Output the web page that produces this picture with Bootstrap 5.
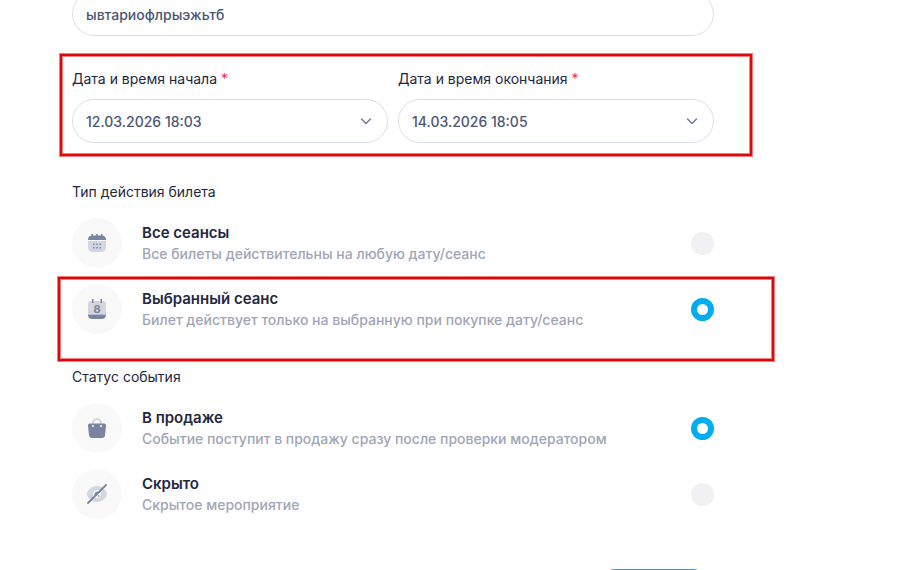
<!DOCTYPE html>
<html lang="ru">
<head>
<meta charset="utf-8">
<meta name="viewport" content="width=device-width, initial-scale=1">
<title>Событие</title>
<link href="https://cdn.jsdelivr.net/npm/bootstrap@5.3.0/dist/css/bootstrap.min.css" rel="stylesheet">
<style>
body { font-family: Inter, "Liberation Sans", sans-serif; font-size: 14px; line-height: 20px; color: #1f2742; height: 100vh; overflow: hidden; }
/* the form is scrolled: its first field starts above the window */
.event-form { margin: -8px 184px 0 72px; }
.pill { height: 44px; border: 1px solid #dbdfe9; border-radius: 22px; padding: 0 13px; font-size: 14px; font-weight: 500; color: #4b5675; }
select.pill { background-size: 16px 16px; background-position: right 13px center;
  background-image: url("data:image/svg+xml,%3Csvg xmlns='http://www.w3.org/2000/svg' viewBox='0 0 16 16'%3E%3Cpath d='M3.5 6 8 10.5 12.5 6' fill='none' stroke='%2378829d' stroke-width='1.6' stroke-linecap='round' stroke-linejoin='round'/%3E%3C/svg%3E"); }
.caption { font-size: 14px; font-weight: 400; line-height: 20px; margin: 0; float: none; }
.dates { margin-top: 33px; column-gap: 10px; }
.dates .caption { margin-bottom: 10px; }
.req { color: #f8285a; }
.group-type { margin-top: 39px; }
.group-status { margin-top: 33px; }
.option { margin-top: 16px; }
.symbol { width: 50px; height: 50px; background: #f9f9f9; margin-right: 20px; color: #7a839f; }
.symbol text { font-size: 11px; font-weight: 700; }
.option-title { font-size: 15px; font-weight: 600; line-height: 20px; padding-top: 2px; }
.option-note { font-size: 14px; font-weight: 500; line-height: 22px; color: #a1a5b7; }
.option .form-check-input { width: 23px; height: 23px; margin: 0; border: 0; background-color: #f1f1f4; }
.option .form-check-input:checked { background: #fff; border: 6px solid #00aeef; }
.btn-save { margin-top: 50px; width: 120px; height: 44px; border-radius: 22px; background: #00aeef; color: #fff; font-size: 14px; font-weight: 500; }
.frame { border: 2px solid #da0a0a; box-shadow: 0 0 0 1px #f08080, inset 0 0 0 1px #f08080; pointer-events: none; }
.frame-dates { inset: -15px -38px -13px -12px; }
.frame-option { inset: -7px -60px -27px -14px; }
</style>
<script src="https://cdn.jsdelivr.net/npm/bootstrap@5.3.0/dist/js/bootstrap.bundle.min.js"></script>
</head>
<body class="bg-white">
<form class="event-form">
  <input type="text" class="form-control pill" aria-label="Название" value="ывтариофлрыэжьтб">

  <div class="dates d-flex position-relative">
    <div class="col">
      <label class="caption d-block" for="start">Дата и время начала <span class="req">*</span></label>
      <select class="form-select pill" id="start"><option>12.03.2026 18:03</option></select>
    </div>
    <div class="col">
      <label class="caption d-block" for="end">Дата и время окончания <span class="req">*</span></label>
      <select class="form-select pill" id="end"><option>14.03.2026 18:05</option></select>
    </div>
    <div class="frame frame-dates position-absolute"></div>
  </div>

  <fieldset class="group-type">
    <legend class="caption">Тип действия билета</legend>
    <label class="option d-flex align-items-center">
      <span class="symbol rounded-circle d-flex align-items-center justify-content-center">
        <svg width="24" height="24" viewBox="0 0 24 24" fill="currentColor">
          <path opacity=".3" d="M3 10h18v6q0 5-5 5H8q-5 0-5-5z"/>
          <path d="M3 9q0-4 3.5-4.500V3h1.500v1.500h3.200V3h1.500v1.500H16V3h1.500v1.500Q21 5 21 9z"/>
          <path d="M8 12.500h1.500V14H8zm3.200 0h1.500V14h-1.500zm3.300 0H16V14h-1.500zM8 16h1.500v1.500H8zm3.200 0h1.500v1.500h-1.500zm3.300 0H16v1.500h-1.500z"/>
        </svg>
      </span>
      <span class="flex-grow-1"><span class="option-title d-block">Все сеансы</span><span class="option-note d-block">Все билеты действительны на любую дату/сеанс</span></span>
      <input class="form-check-input" type="radio" name="type">
    </label>
    <label class="option d-flex align-items-center position-relative">
      <span class="symbol rounded-circle d-flex align-items-center justify-content-center">
        <svg width="24" height="24" viewBox="0 0 24 24" fill="currentColor">
          <path opacity=".3" d="M6 4h12q3 0 3 3v10H3V7q0-3 3-3z"/>
          <path d="M3 17.500h18Q21 22 16.500 22h-9Q3 22 3 17.500zM7 2h1.500v4H7zm8.500 0H17v4h-1.500z"/>
          <text x="12" y="16" text-anchor="middle">8</text>
        </svg>
      </span>
      <span class="flex-grow-1"><span class="option-title d-block">Выбранный сеанс</span><span class="option-note d-block">Билет действует только на выбранную при покупке дату/сеанс</span></span>
      <input class="form-check-input" type="radio" name="type" checked>
      <span class="frame frame-option position-absolute"></span>
    </label>
  </fieldset>

  <fieldset class="group-status">
    <legend class="caption">Статус события</legend>
    <label class="option d-flex align-items-center">
      <span class="symbol rounded-circle d-flex align-items-center justify-content-center">
        <svg width="24" height="24" viewBox="0 0 24 24" fill="currentColor">
          <path opacity=".3" d="M7 9V7a5 5 0 0 1 10 0v2h-2V7a3 3 0 0 0-6 0v2z"/>
          <path fill-rule="evenodd" d="M5 7.500h14q2.300 0 2 2.500l-1 9q-.3 3-3 3H7q-2.700 0-3-3l-1-9Q2.700 7.500 5 7.500zM8 9a1 1 0 1 0 0 2 1 1 0 0 0 0-2zm8 0a1 1 0 1 0 0 2 1 1 0 0 0 0-2z"/>
        </svg>
      </span>
      <span class="flex-grow-1"><span class="option-title d-block">В продаже</span><span class="option-note d-block">Событие поступит в продажу сразу после проверки модератором</span></span>
      <input class="form-check-input" type="radio" name="status" checked>
    </label>
    <label class="option d-flex align-items-center">
      <span class="symbol rounded-circle d-flex align-items-center justify-content-center">
        <svg width="24" height="24" viewBox="0 0 24 24" fill="currentColor">
          <path opacity=".3" fill-rule="evenodd" d="M12 4c5.500 0 10 4.500 10 8s-4.500 8-10 8S2 15.500 2 12s4.500-8 10-8zm0 4a4 4 0 1 0 0 8 4 4 0 0 0 0-8z"/>
          <path d="M9.500 13.500Q9 10 12.500 9.500L14 10.500 11 14z"/>
          <circle cx="13.700" cy="14" r=".8"/>
          <path d="M3 21 21 3" fill="none" stroke="currentColor" stroke-width="1.800" stroke-linecap="round"/>
        </svg>
      </span>
      <span class="flex-grow-1"><span class="option-title d-block">Скрыто</span><span class="option-note d-block">Скрытое мероприятие</span></span>
      <input class="form-check-input" type="radio" name="status">
    </label>
  </fieldset>

  <div class="d-flex justify-content-end">
    <button type="button" class="btn btn-save border-0">Сохранить</button>
  </div>
</form>
</body>
</html>
